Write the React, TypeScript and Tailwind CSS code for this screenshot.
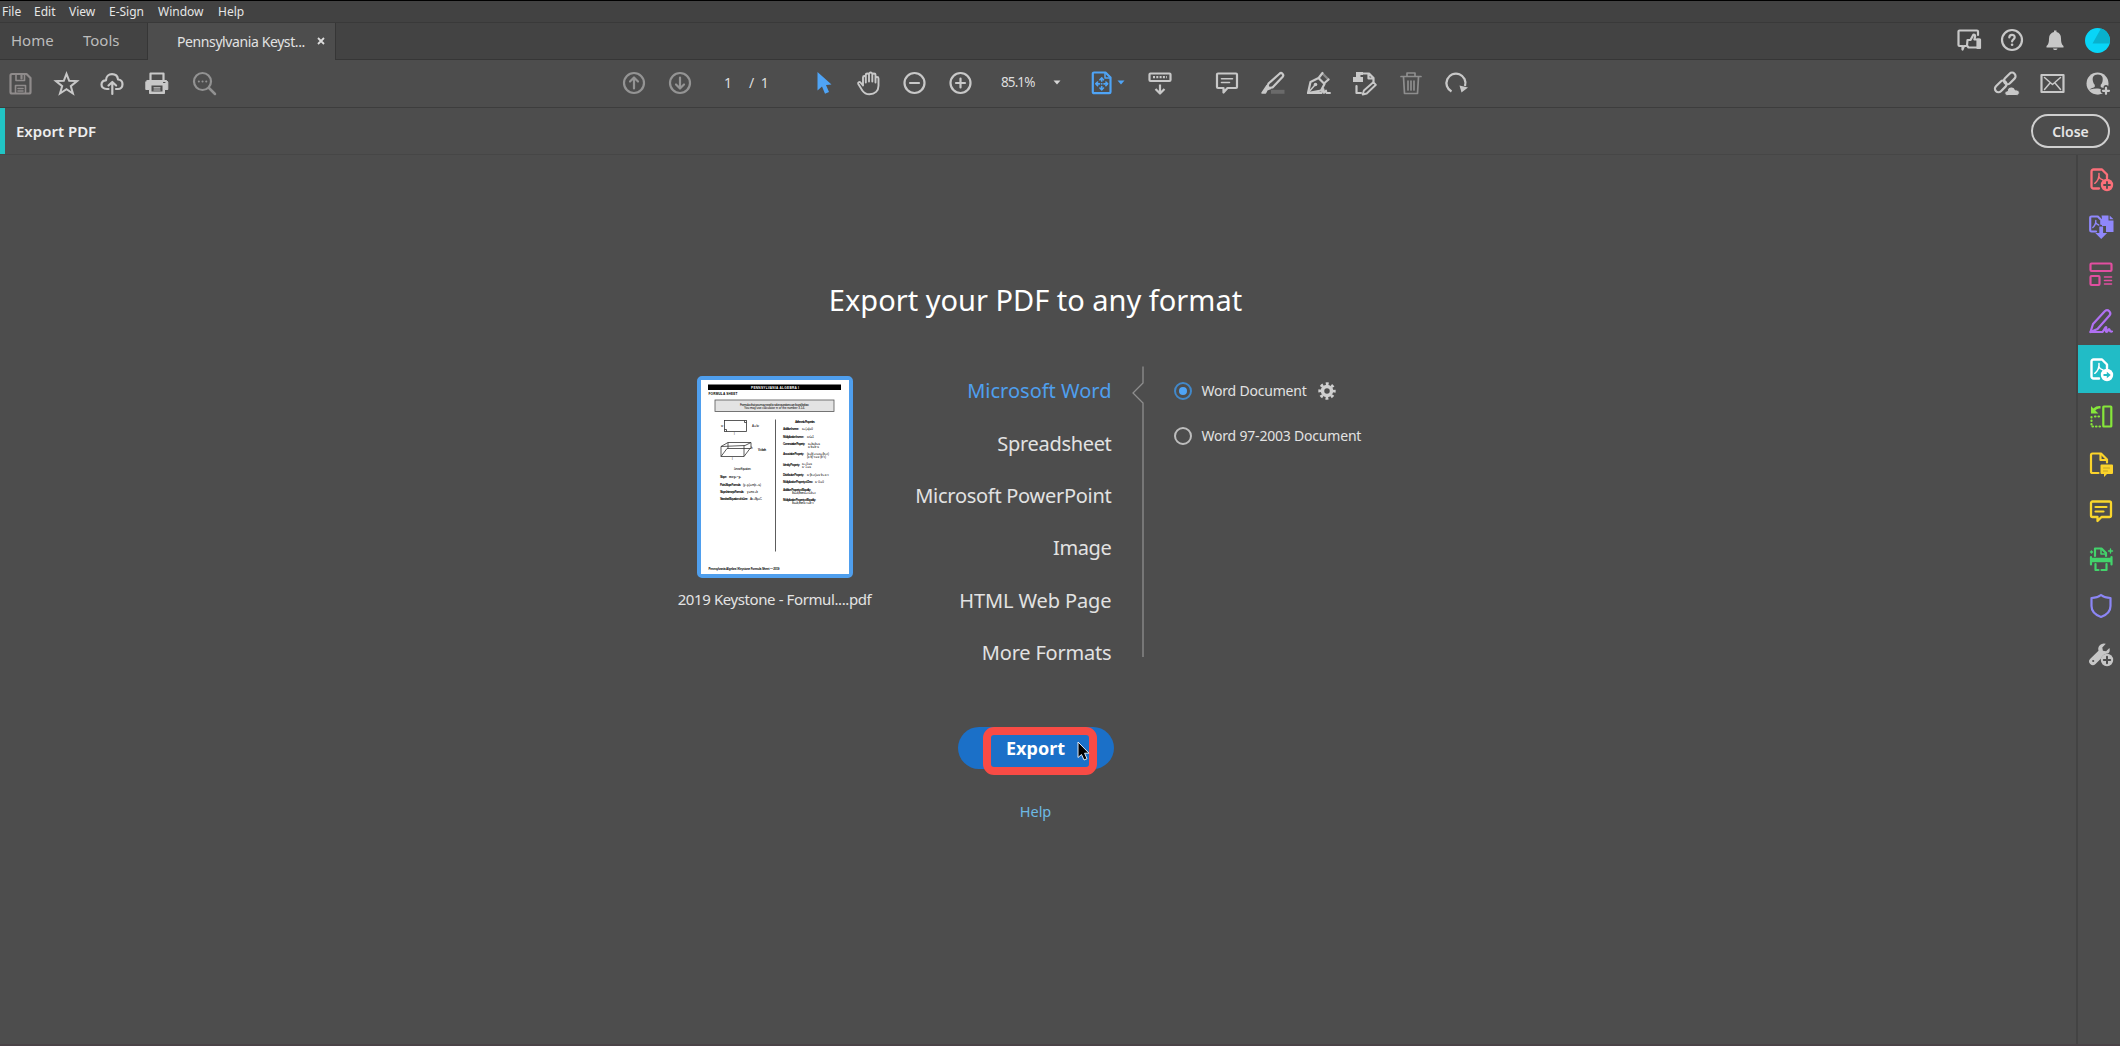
import React from 'react';

interface IconProps {
  children: React.ReactNode;
  className?: string;
}

// Every icon is drawn on a 24px grid, strokes take the current colour
const Icon: React.FC<IconProps> = ({ children, className = 'text-[#c8c8c8]' }) => (
  <svg
    viewBox="0 0 24 24"
    fill="none"
    stroke="currentColor"
    strokeWidth="2.200"
    strokeLinecap="round"
    strokeLinejoin="round"
    className={`size-6 shrink-0 overflow-visible ${className}`}
  >
    {children}
  </svg>
);

const Caret: React.FC<{ className: string }> = ({ className }) => (
  <svg viewBox="0 0 8 5" fill="currentColor" className={`h-[5px] w-2 shrink-0 ${className}`}>
    <path d="M0.5 0.5h7L4 4.5z" />
  </svg>
);

const menuItems = [
  { label: 'File', className: 'w-8' },
  { label: 'Edit', className: 'w-[35px]' },
  { label: 'View', className: 'w-10' },
  { label: 'E-Sign', className: 'w-[49px]' },
  { label: 'Window', className: 'w-[60px]' },
  { label: 'Help', className: 'w-10' },
];

const formats = [
  { label: 'Microsoft Word', className: 'text-[#4f9fee]' },
  { label: 'Spreadsheet', className: 'tracking-[-0.32px]' },
  { label: 'Microsoft PowerPoint', className: 'tracking-[-0.28px]' },
  { label: 'Image', className: 'tracking-[-0.35px]' },
  { label: 'HTML Web Page', className: 'tracking-[-0.1px]' },
  { label: 'More Formats', className: 'tracking-[-0.2px]' },
];

const pdfMark = (
  <path strokeWidth="1.500" d="M10 6.500c.3 2-.1 4-.9 5.800-.8 1.700-1.800 3-3.300 4M9.700 9.500c.8 1.900 2.200 3 4.300 3.500" />
);

const sideTools = [
  {
    id: 'create',
    className: 'text-[#fb6f79]',
    icon: (
      <>
        <path strokeWidth="2.300" d="M10 21.500H4.500a2 2 0 0 1-2-2v-15a2 2 0 0 1 2-2h8.500l5 5v4" />
        {pdfMark}
        <circle cx="18" cy="18" r="6.200" fill="currentColor" stroke="none" />
        <path stroke="#4d4d4d" strokeWidth="1.800" d="M18 15v6M15 18h6" />
      </>
    ),
  },
  {
    id: 'combine',
    className: 'text-[#8f87fb]',
    icon: (
      <>
        <path d="M7 17.500H2.500a1.300 1.300 0 0 1-1.300-1.300V3.800a1.300 1.300 0 0 1 1.300-1.300h6.300l3.500 3.500v4" />
        <path strokeWidth="1.400" d="M6.800 6.500c.1 3-1 5.300-3 7M6.700 8.500c.6 1.300 1.500 2 3 2.500" />
        <path fill="currentColor" stroke="none" d="M12.500 1.500h7v5h5v11.500h-7.500v-6h-4V5z" />
        <path fill="currentColor" stroke="none" d="M20.700 1.500l3.800 3.800h-3.800z" />
        <path fill="currentColor" stroke="none" d="M10.300 12.500h3.800v6.500h4L12.200 25l-5.900-6h4z" />
      </>
    ),
  },
  {
    id: 'organize',
    className: 'text-[#e14fa0]',
    icon: (
      <>
        <rect x="1.500" y="1.500" width="21" height="7.500" rx="1" />
        <rect x="1.500" y="14" width="9" height="9" rx="1" />
        <path strokeWidth="1.600" d="M15.500 15h7M15.500 18.500h7M15.500 22h7" />
      </>
    ),
  },
  {
    id: 'sign',
    className: 'text-[#b070f2]',
    icon: (
      <>
        <path d="M1.500 23l2.500-8L16 2a3.200 3.200 0 0 1 4.500 4.500L8.500 20z" />
        <path d="M1.500 23h12c2-2 2.500-5 3.500-5s-1 5 .5 5 1.500-3 2.500-3 0 3 3 2.500" />
      </>
    ),
  },
  {
    id: 'export',
    className: 'text-white',
    icon: (
      <>
        <path strokeWidth="2.400" d="M10 21.500H4.500a2 2 0 0 1-2-2v-15a2 2 0 0 1 2-2h8.500l5 5v4" />
        {pdfMark}
        <circle cx="18" cy="18" r="6.200" fill="currentColor" stroke="none" />
        <path stroke="#21bcc6" strokeWidth="2" strokeLinecap="butt" d="M14.500 18h4" />
        <path fill="#21bcc6" stroke="none" d="M17.800 14.800l3.900 3.200-3.900 3.200z" />
      </>
    ),
  },
  {
    id: 'pages',
    className: 'text-[#86e63a]',
    icon: (
      <>
        <rect x="14.300" y="2.500" width="8" height="20" rx="0.500" />
        <path strokeDasharray="0.500 3" d="M11 22.500H2.500V12.500" />
        <path strokeDasharray="0.500 3" d="M6 12.500h5.500" />
        <path fill="currentColor" stroke="none" d="M2 2l2.300 2.500C6.500 2.500 8.500 1.800 11.500 2v2.500c-2.300 0-3.800.6-5.200 2L9.500 9.500H2z" />
      </>
    ),
  },
  {
    id: 'send',
    className: 'text-[#fbd32b]',
    icon: (
      <>
        <path d="M9.500 21H3.500a1.500 1.500 0 0 1-1.500-1.500V3a1.500 1.500 0 0 1 1.500-1.500h8.500L18 7.500v3" />
        <path d="M11.500 2v6h6" />
        <path fill="currentColor" stroke="none" d="M12.500 12.500H23a1 1 0 0 1 1 1v7.500a1 1 0 0 1-1 1h-5l-3 3v-3h-2.500a1 1 0 0 1-1-1v-7.500a1 1 0 0 1 1-1z" />
        <path stroke="#c4a52b" strokeWidth="1.200" d="M14.500 16h6M14.500 19h4" />
      </>
    ),
  },
  {
    id: 'comment',
    className: 'text-[#f9d62c]',
    icon: (
      <>
        <path strokeWidth="2.300" d="M3.500 2.500h17a1.500 1.500 0 0 1 1.500 1.500v12.500a1.500 1.500 0 0 1-1.500 1.500h-8l-4 4v-4h-5A1.500 1.500 0 0 1 2 16.500V4a1.500 1.500 0 0 1 1.500-1.500z" />
        <path d="M6.500 8h11M6.500 12.500h8" />
      </>
    ),
  },
  {
    id: 'scan',
    className: 'text-[#43d36b]',
    icon: (
      <>
        <path d="M6 9V1.500h6.500l4.500 4.500v3" />
        <path strokeWidth="1.500" d="M12 2v5h5" />
        <path strokeLinecap="butt" strokeWidth="4.500" d="M1.500 13h21.500" />
        <path d="M2 10v7.500M22.500 10v7.500" />
        <path d="M6.500 17v6h3M17.500 17v6h-5" />
        <path strokeWidth="1.400" d="M21.500 2v4M19.500 4h4M2.500 4v2M1.500 5h2" />
      </>
    ),
  },
  {
    id: 'protect',
    className: 'text-[#8c86f5]',
    icon: <path d="M12 1c2.500 2 6 3 9.500 3v8c0 5.500-4 9-9.500 11C6.500 21 2.500 17.500 2.500 12V4C6 4 9.500 3 12 1z" />,
  },
  {
    id: 'more',
    className: 'text-[#c6c6c6]',
    icon: (
      <>
        <path fill="currentColor" stroke="none" d="M1.300 16.700l8.200-8a5.600 5.600 0 0 1 7.300-6.900l-3.500 3.700.6 3.200 3.200.6 3.300-3.400c.7 2 .4 3.900-1 5.400-3 .1-6.500 2.400-7.400 5.200L6.500 22a3.500 3.500 0 0 1-5.200-5.300z" />
        <circle cx="4.200" cy="19" r="1.100" fill="#4d4d4d" stroke="none" />
        <circle cx="18" cy="18" r="6.200" fill="currentColor" stroke="none" />
        <path stroke="#4d4d4d" strokeWidth="2" d="M18 14.800v6.400M14.800 18h6.400" />
      </>
    ),
  },
];

const MenuBar = () => (
  <div className="flex h-[22px] items-center border-t border-black bg-[#424242] pl-0.5 text-[12px] text-[#e6e6e6]">
    {menuItems.map(item => (
      <span key={item.label} className={item.className}>
        {item.label}
      </span>
    ))}
  </div>
);

const TabBar = () => (
  <div className="flex h-[38px] border-t border-[#393939] bg-[#434343]">
    <div className="flex w-[148px] items-center border-r border-b border-[#363636] pb-0.5 pl-[11px] text-[15px] text-[#bcbcbc]">
      <span className="w-[72px]">Home</span>
      <span>Tools</span>
    </div>
    <div className="flex w-[187px] items-center bg-[#4d4d4d] pb-px pl-[29px] text-[14px] text-[#e2e2e2]">
      <span className="w-[140px] tracking-[-0.4px]">Pennsylvania Keyst...</span>
      <svg viewBox="0 0 8 8" className="size-2" stroke="#dcdcdc" strokeWidth="1.800">
        <path d="M1 1l6 6M7 1L1 7" />
      </svg>
    </div>
    <div className="flex flex-1 items-center justify-end border-b border-l border-[#363636] pr-2.5 pb-0.5">
      <Icon className="mr-[19px] text-[#c8c8c8]">
        <path d="M9 18H7L5.500 21.500V18H2.500a1 1 0 0 1-1-1V3.500a1 1 0 0 1 1-1h17.500a1 1 0 0 1 1 1V7" />
        <path d="M10.500 12h3l3-5.500c1.500 0 2 1 1.500 2.500l-.6 2.500h4.600v8H11.500L10 17.500z" />
        <path fill="currentColor" d="M20.500 11.500h2.500v8.500h-2.500z" />
      </Icon>
      <Icon className="mr-[19px] text-[#c8c8c8]">
        <circle cx="12" cy="12" r="10" />
        <path d="M9.300 9.500C9.300 6 14.700 6 14.700 9.300c0 2-2.600 2-2.600 4.200" />
        <circle cx="12.100" cy="16.800" r="1.300" fill="currentColor" stroke="none" />
      </Icon>
      <Icon className="mr-[18px] text-[#c8c8c8]">
        <path
          fill="currentColor"
          stroke="none"
          d="M11 4V2.500h2.500V4c3 .7 4.500 3 4.500 6.500 0 3.500.5 6 2.500 7.500v1.500h-17V18c2-1.500 2.500-4 2.500-7.500C6 7 8 4.700 11 4zM10 20.500h4.500c-.5 2-4 2-4.500 0z"
        />
      </Icon>
      <svg viewBox="0 0 25 25" className="size-[25px]">
        <circle cx="12.500" cy="12.500" r="12.500" fill="#08d5f7" />
        <path d="M16 .5L7.500 15.500h17.200C26 8 22 2 16 .5z" fill="#08b1cd" />
      </svg>
    </div>
  </div>
);

const Toolbar = () => (
  <div className="flex h-[47px] items-center bg-[#4d4d4d] pr-2.5 pb-0.5 pl-2 text-[14px] text-[#dedede]">
    <div className="flex gap-[22px]">
      <Icon className="text-[#8f8b8b]">
        <path d="M4 3h14.500l4 4v14a1.500 1.500 0 0 1-1.500 1.500H4A1.500 1.500 0 0 1 2.500 21V4.500A1.500 1.500 0 0 1 4 3z" />
        <path d="M8 3v6.500h8.500V3M7.500 22v-7.500h10V22M10 17.500h5M10 20h5" strokeWidth="1.600" />
        <path d="M13.500 4.500v3" />
      </Icon>
      <Icon>
        <path strokeLinejoin="miter" d="M12.500 2.800l2.700 7 7.800.3-6.200 5 2.100 7.400-6.400-4.300-6.500 4.300 2.200-7.400-6.200-5 7.800-.3z" strokeWidth="2" />
      </Icon>
      <Icon>
        <path d="M8.500 18H7C3 18 1.500 15.500 1.500 13.500c0-2.500 2-4.300 4.500-4.200C6 5.500 8.800 3.200 12 3.200c3.500 0 5.700 2.300 6 5.300 2.700.2 4.500 2 4.500 4.700 0 2.800-2 4.800-4.500 4.800h-2" />
        <path d="M12.300 23v-11M8.500 14.500l3.800-3.500 3.800 3.500" />
      </Icon>
      <Icon className="-ml-px mr-px text-[#c8c8c8]">
        <path d="M5.500 9V2.500h13V9" />
        <path fill="currentColor" d="M2.500 9.500h19l1.300 1.500v7.500h-3.300v4h-15v-4H.8V11z" strokeWidth="1" />
        <path fill="#4d4d4d" stroke="none" d="M6.500 14.500h11v6h-11z" />
        <path d="M9 16.800h6M9 19h6" strokeWidth="1.200" />
        <path stroke="#4d4d4d" strokeWidth="1" d="M18.500 11.500h1.500" />
      </Icon>
      <Icon className="text-[#929292]">
        <circle cx="10.500" cy="10.500" r="8.500" />
        <path strokeWidth="2.500" d="M17 17l6 6" />
        <path strokeWidth="2" d="M6.800 10.500h.1M10.500 10.500h.1M14.200 10.500h.1" />
      </Icon>
    </div>
    <div className="ml-[406px] flex gap-[22px]">
      <Icon className="text-[#949494]">
        <circle cx="12" cy="12" r="10" />
        <path d="M12 17.500V7M8 10.500L12 6.500l4 4" />
      </Icon>
      <Icon className="text-[#949494]">
        <circle cx="12" cy="12" r="10" />
        <path d="M12 6.500V17M8 13.500l4 4 4-4" />
      </Icon>
    </div>
    <span className="ml-6 w-[25px] pl-2">1</span>
    <span className="ml-2 w-[62px] [word-spacing:3px]">/ 1</span>
    <div className="flex gap-[22px]">
      <Icon className="text-[#4fa4f6]">
        <path fill="currentColor" stroke="none" d="M6.500 1L20.500 13.500l-5.500.6 3 6.900-4 1.700-3-7.200-4.500 4z" />
      </Icon>
      <Icon>
        <path
          strokeWidth="1.900"
          d="M6 14.500L3.500 11.500c-1-1.200-3 0-2.200 1.500l4 6.500c1.700 2.500 4 3.800 7.200 3.800 5.500 0 9-3.500 9-8.500V7.500c0-2-3-2-3 0v4M18.500 11V4c0-2-3.200-2-3.200 0v6.500M15.300 10V3c0-2-3.300-2-3.300 0v7.500M12 10V4c0-2-3.200-2-3.200 0v7.500M8.800 6.500c0-2-2.800-2-2.800 0v8"
        />
      </Icon>
      <Icon>
        <circle cx="11.500" cy="12" r="10" />
        <path d="M7 12h9" />
      </Icon>
      <Icon>
        <circle cx="11.500" cy="12" r="10" />
        <path d="M7 12h9M11.500 7.500v9" />
      </Icon>
    </div>
    <span className="ml-[28px] w-[52px] text-[13.500px] tracking-[-0.9px]">85.1%</span>
    <Caret className="text-[#d6d6d6]" />
    <Icon className="ml-[29px] text-[#4fa4f6]">
      <path d="M4 1.500h11.500l5 5V21a1.200 1.200 0 0 1-1.200 1.200H4A1.200 1.200 0 0 1 2.800 21V2.700A1.200 1.200 0 0 1 4 1.500z" />
      <path strokeWidth="1.500" d="M15 2v5h5" />
      <path strokeWidth="1.700" d="M11.700 7v3M11.700 15.500v3M6.500 12.800h3M14 12.800h3M11.700 12.800h.1" />
      <path strokeWidth="1.600" d="M9.900 8.800l1.800-1.800 1.800 1.800M9.900 17l1.800 1.800 1.800-1.800M7.600 11l-1.800 1.800 1.800 1.800M15.900 11l1.800 1.800-1.800 1.800" />
    </Icon>
    <Caret className="ml-[3px] text-[#4fa4f6]" />
    <Icon className="ml-[23px] text-[#c8c8c8]">
      <rect x="1.500" y="2.500" width="21" height="7.500" rx="1" />
      <path strokeLinecap="butt" d="M5 6.200h14" strokeDasharray="2 1.300" />
      <path d="M12 13.500V22M7.500 18l4.500 4.500 4.500-4.500" strokeLinecap="butt" />
    </Icon>
    <div className="ml-[43px] flex gap-[22px]">
      <Icon>
        <path d="M3 2.500h18a1 1 0 0 1 1 1V16a1 1 0 0 1-1 1h-8.500l-4 4.500V17H3a1 1 0 0 1-1-1V3.500a1 1 0 0 1 1-1z" />
        <path strokeWidth="1.600" d="M6.500 7.800h11M6.500 11.500h8" />
      </Icon>
      <Icon>
        <path d="M18.500 2.700a2.200 2.200 0 0 1 3.200 3L11.500 16.500l-5.500.5 1.500-4.500z" />
        <path fill="currentColor" d="M6 14.500l3.500 3-4 1.500H6l-1.500 3H1z" strokeWidth="1.500" />
        <path stroke="#6a6a6a" strokeWidth="4" strokeLinecap="butt" d="M10 20.800h13.500" />
      </Icon>
      <Icon className="-ml-px text-[#c8c8c8]">
        <path d="M2 22L4.500 11l8-4 6 6L15 19.500z" />
        <path d="M2 22l6.500-7.500" strokeWidth="1.500" />
        <circle cx="9.500" cy="13.500" r="1.800" fill="currentColor" stroke="none" />
        <path stroke="#8a8a8a" d="M17 3l5.500 5.500" />
        <path d="M13 6.500L16.500 2M22.500 8.500L18.500 12" />
        <path strokeWidth="1.900" d="M2 22h13.500l2-4 .5 4 2-2.500.5 2.500h3.500" />
      </Icon>
      <Icon>
        <path d="M11 2.500h6l4.500 4.500v3.500M16.500 3v4.500h5M4.500 15v7h4.500" />
        <path fill="currentColor" stroke="none" d="M4 1h7v3H8.500v2H11v5H1V6h3z" />
        <path d="M21.300 11.200l2.600 2.600-9.200 8.700-4 1 1.200-4z" strokeWidth="1.900" />
      </Icon>
      <Icon className="ml-px text-[#8e8e8e]">
        <path d="M2 5.500h20M8 5V2h8v3M4.500 6l1 16.500h13l1-16.500M9 10v9M12 10v9M15 10v9" strokeWidth="1.700" />
      </Icon>
      <Icon className="-ml-px text-[#c8c8c8]">
        <path strokeWidth="2.300" strokeLinecap="butt" d="M7.500 20.500A9.500 9.500 0 1 1 21 15" />
        <path fill="currentColor" stroke="none" d="M15.500 14.500l8.500 2L17.500 21.500z" />
      </Icon>
    </div>
    <div className="ml-auto flex gap-[22px]">
      <Icon>
        <rect x="9" y="4" width="13.500" height="7" rx="3.500" transform="rotate(-45 15.700 7.500)" />
        <rect x="0" y="12" width="13.500" height="7" rx="3.500" transform="rotate(-45 6.700 15.500)" />
        <path stroke="#4d4d4d" strokeWidth="1" fill="currentColor" d="M13 24.500c-3 0-3-4.500.3-4.500 0-3 2.200-4 4-4 2.500 0 3.500 1.500 3.800 2.800 5.500-.5 5.400 5.700 1.400 5.700z" />
      </Icon>
      <Icon>
        <rect x="1.500" y="4" width="22" height="17" />
        <path strokeWidth="1.500" d="M4.500 6.500l8 7 8-7M4.500 18.500l5.500-6.500M20.500 18.500L15 12" />
      </Icon>
      <Icon>
        <circle cx="11.500" cy="12.500" r="11" fill="currentColor" stroke="none" />
        <path fill="#4d4d4d" stroke="none" d="M11.800 3.500c-4.500 0-5.800 3-4.800 7 .4 1.500 1 2.500 1.800 3.300v2C8 17 4.500 17.300 3.500 18.500c4 1 12 1 16-.500-1-1-4-1.200-4.800-2.200v-2c.8-.8 1.500-1.800 1.800-3.300.9-4-.3-7-4.700-7z" />
        <path fill="currentColor" stroke="none" d="M4 18.500c4-1.500 9-1.500 12 0L14 23c-4 1-7.500-.5-10-4.500z" />
        <path stroke="#4d4d4d" strokeWidth="5" d="M20 16.500v6M17 19.700h6" />
        <path d="M20 16.800v6M17 19.800h6" />
      </Icon>
    </div>
  </div>
);

const FormulaPage = () => (
  <svg viewBox="0 0 148 193" className="h-[194px] w-[148px] bg-white" fontFamily="'Liberation Sans', sans-serif" fontSize="3.200">
    <rect x="7" y="4" width="133" height="5.500" fill="#000" />
    <text x="50" y="8" fill="#fff" fontWeight="700" textLength="48">PENNSYLVANIA ALGEBRA I</text>
    <text x="7.500" y="14" fontWeight="700" textLength="29">FORMULA SHEET</text>
    <rect x="14" y="19.500" width="119" height="11.500" fill="#e3e3e3" stroke="#555" strokeWidth="0.800" />
    <text x="39" y="25" textLength="69">Formulas that you may need to solve questions are found below.</text>
    <text x="43" y="28.500" textLength="61">You may use calculator π or the number 3.14.</text>
    <g fill="none" stroke="#333" strokeWidth="0.800">
      <rect x="23.500" y="40" width="22" height="11" />
      <path d="M23.500 49h2v2M43.500 40v2h2" />
      <path d="M20 66l7-4h23l-6 3zM20 66v10l6-8h24v-6M20 76h23l6-8M43 76V65M27 62v6" />
      <path d="M74.500 39v132" />
    </g>
    <g fontSize="3">
      <text x="20" y="46.500">w</text>
      <text x="33" y="54.500">l</text>
      <text x="51" y="46.500" textLength="7">A = lw</text>
      <text x="50" y="68">h</text>
      <text x="31" y="79">l</text>
      <text x="57" y="70.500" textLength="8" fontWeight="700">V = lwh</text>
      <text x="33" y="89.500" textLength="17" fontStyle="italic">Linear Equations</text>
    </g>
    <g fontSize="3" fontWeight="700">
      <text x="19" y="97.500" textLength="7">Slope:</text>
      <text x="28" y="97.500" textLength="12">m = y₂ – y₁</text>
      <text x="19" y="105" textLength="21">Point-Slope Formula:</text>
      <text x="19" y="112.500" textLength="24">Slope-Intercept Formula:</text>
      <text x="19" y="119.500" textLength="28">Standard Equation of a Line:</text>
      <text x="94" y="42.500" textLength="20">Arithmetic Properties</text>
      <text x="82" y="49" textLength="16">Additive Inverse:</text>
      <text x="82" y="57" textLength="21">Multiplicative Inverse:</text>
      <text x="82" y="64" textLength="22">Commutative Property:</text>
      <text x="82" y="74" textLength="21">Associative Property:</text>
      <text x="82" y="85" textLength="17">Identity Property:</text>
      <text x="82" y="95" textLength="21">Distributive Property:</text>
      <text x="82" y="102.500" textLength="30">Multiplicative Property of Zero:</text>
      <text x="82" y="110" textLength="28">Additive Property of Equality:</text>
      <text x="82" y="120" textLength="33">Multiplicative Property of Equality:</text>
      <text x="7.500" y="189" textLength="71">Pennsylvania Algebra I Keystone Formula Sheet — 2019</text>
    </g>
    <g fontSize="3">
      <text x="42" y="105" textLength="18">(y – y₁) = m(x – x₁)</text>
      <text x="46" y="112.500" textLength="11">y = mx + b</text>
      <text x="49" y="119.500" textLength="12">Ax + By = C</text>
      <text x="101" y="49" textLength="11">a + (–a) = 0</text>
      <text x="106" y="57" textLength="7">a · ¹⁄ₐ = 1</text>
      <text x="107" y="64" textLength="12">a + b = b + a</text>
      <text x="107" y="67" textLength="11">a · b = b · a</text>
      <text x="106" y="74" textLength="22">(a + b) + c = a + (b + c)</text>
      <text x="106" y="77.500" textLength="19">(a · b) · c = a · (b · c)</text>
      <text x="101" y="84" textLength="10">a + 0 = a</text>
      <text x="101" y="87.500" textLength="9">a · 1 = a</text>
      <text x="106" y="95" textLength="22">a · (b + c) = a · b + a · c</text>
      <text x="114" y="102.500" textLength="9">a · 0 = 0</text>
      <text x="91" y="113" textLength="24">If a = b, then a + c = b + c</text>
      <text x="91" y="123.500" textLength="22">If a = b, then a · c = b · c</text>
    </g>
  </svg>
);

const ExportPanel = () => (
  <main className="flex flex-1 flex-col items-center pr-[5px]">
    <h1 className="mt-[125px] h-10 text-[29px] leading-10 whitespace-nowrap text-white">Export your PDF to any format</h1>

    <div className="mt-[46px] flex h-[315px] w-[718px]">
      <div className="flex w-[196px] flex-col items-center pt-2.5">
        <div className="rounded-[5px] border-4 border-[#4f9fee]">
          <FormulaPage />
        </div>
        <span className="mt-2.5 text-[15px] tracking-[-0.4px] whitespace-nowrap text-[#e4e4e4]">
          2019 Keystone - Formul....pdf
        </span>
      </div>

      <ul className="-mt-px flex w-[239px] flex-col items-end text-[20px] text-[#e2e2e2]">
        {formats.map(format => (
          <li key={format.label} className={`flex h-[52.4px] items-center whitespace-nowrap ${format.className}`}>
            {format.label}
          </li>
        ))}
      </ul>

      <svg viewBox="0 0 12 292" className="ml-5 h-[292px] w-3" fill="none" stroke="#8e8e8e" strokeWidth="1.300">
        <path d="M11 0.500V17L1 27l10 10v254" />
      </svg>

      <div className="ml-[30px] pt-0.5 text-[14px] tracking-[-0.2px] whitespace-nowrap text-[#e2e2e2]">
        <label className="flex h-[45px] items-center">
          <span className="flex size-[18px] items-center justify-center rounded-full border-2 border-[#4288c9]">
            <span className="size-2 rounded-full bg-[#4fa4f6]" />
          </span>
          <span className="ml-2.5">Word Document</span>
          <svg viewBox="0 0 18 18" className="ml-[11px] size-[18px]" fill="none" stroke="#cfcfcf">
            <circle cx="9" cy="9" r="4.500" strokeWidth="3.500" />
            <circle cx="9" cy="9" r="7.300" strokeWidth="2.800" strokeDasharray="2.900 2.833" strokeDashoffset="1.450" />
          </svg>
        </label>
        <label className="flex h-[45px] items-center">
          <span className="size-[18px] rounded-full border-2 border-[#bdbdbd]" />
          <span className="ml-2.5">Word 97-2003 Document</span>
        </label>
      </div>
    </div>

    <div className="relative mt-[46px]">
      <button className="block h-[42px] w-[156px] rounded-full bg-[#1b70c8] text-[18px] font-bold text-white">
        Export
      </button>
      <div className="absolute top-0 left-[25px] h-12 w-[114px] rounded-[11px] border-8 border-[#f84b45]" />
      <svg viewBox="0 0 13 20" className="absolute top-3.5 left-[119px] h-5 w-[13px]">
        <path d="M1 1v15.500l3.500-3 2.500 5.500 3-1.300L7.600 12.200H12z" fill="#000" stroke="#dfe9f5" strokeWidth="1" />
      </svg>
    </div>
    <a className="mt-8 text-[14.5px] text-[#6db9e4]">Help</a>
  </main>
);

const SideBar = () => (
  <aside className="w-[44px] border-l-2 border-[#434343]">
    {sideTools.map(tool => (
      <div
        key={tool.id}
        className={`flex h-[47.5px] items-center pl-[11px] ${tool.id === 'export' ? 'bg-[#21bcc6]' : ''}`}
      >
        <Icon className={tool.className}>{tool.icon}</Icon>
      </div>
    ))}
  </aside>
);

export default function App() {
  return (
    <div className="flex h-[1046px] w-[2120px] flex-col overflow-hidden bg-[#4d4d4d] font-['Noto_Sans','Open_Sans',sans-serif]">
      <MenuBar />
      <TabBar />
      <Toolbar />
      <div className="flex h-[48px] items-center justify-between border-t border-b border-t-[#3d3d3d] border-b-[#464646] pr-2.5">
        <div className="flex h-full items-center border-l-[5px] border-[#21c4c4] pl-[11px] text-[15px] font-semibold text-[#eeeeee]">
          Export PDF
        </div>
        <button className="h-[34px] w-[79px] rounded-full border-2 border-[#cfcfcf] text-[14px] font-semibold text-[#e6e6e6]">
          Close
        </button>
      </div>
      <div className="flex flex-1 border-b-2 border-[#4a4347]">
        <ExportPanel />
        <SideBar />
      </div>
    </div>
  );
}
